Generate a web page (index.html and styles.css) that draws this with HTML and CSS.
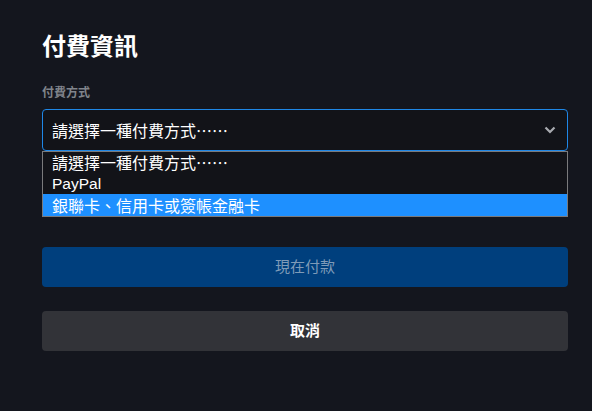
FILE: index.html
```html
<!DOCTYPE html>
<html lang="zh-Hant">
<head>
<meta charset="utf-8">
<link rel="stylesheet" href="styles.css">
</head>
<body>
<div class="panel">
  <h1 class="title">付費資訊</h1>
  <div class="field">
    <div class="label">付費方式</div>
    <div class="select-wrap">
      <div class="select">
        <span class="select-text">請選擇一種付費方式……</span>
        <svg class="chevron" width="12" height="8" viewBox="0 0 12 8"><path d="M1.5 1.5 L6 6 L10.5 1.5" fill="none" stroke="#a9abb0" stroke-width="2.2"/></svg>
      </div>
      <ul class="options">
        <li class="option">請選擇一種付費方式……</li>
        <li class="option latin">PayPal</li>
        <li class="option active">銀聯卡、信用卡或簽帳金融卡</li>
      </ul>
    </div>
  </div>
  <div class="actions">
    <button class="btn btn-primary">現在付款</button>
    <button class="btn btn-secondary">取消</button>
  </div>
</div>
</body>
</html>
```
FILE: styles.css
```css
html, body {
  margin: 0;
  padding: 0;
  background: #14161e;
  font-family: "Noto Sans CJK TC", "Noto Sans", sans-serif;
  color: #ffffff;
}
.panel {
  width: 526px;
  padding: 27px 0 0 42px;
}
.title {
  margin: 0;
  font-size: 24px;
  font-weight: 700;
  line-height: 36px;
  color: #ffffff;
}
.field {
  margin-top: 21px;
}
.label {
  font-size: 12px;
  font-weight: 700;
  line-height: 16px;
  color: #80848b;
}
.select-wrap {
  position: relative;
  margin-top: 9px;
}
.select {
  box-sizing: border-box;
  height: 42px;
  border: 1px solid #1f87e6;
  border-radius: 4px;
  background: #121318;
  display: flex;
  align-items: center;
  justify-content: space-between;
  padding: 0 11px 0 9px;
}
.select-text {
  font-size: 16px;
  line-height: 20px;
  color: #ffffff;
}
.chevron {
  display: block;
}
.options {
  position: absolute;
  left: 0;
  top: 42px;
  width: 526px;
  box-sizing: border-box;
  margin: 0;
  padding: 0;
  list-style: none;
  border: 1px solid #7a7a7c;
  background: #121318;
}
.option {
  font-size: 16px;
  line-height: 21px;
  height: 21px;
  padding: 0 9px;
  color: #ffffff;
  white-space: nowrap;
}
.option.latin {
  font-family: "Liberation Sans", "Noto Sans CJK TC", sans-serif;
  font-size: 15.5px;
}
.option.active {
  background: #1e90ff;
  height: 22px;
  line-height: 22px;
}
.actions {
  margin-top: 96px;
  display: flex;
  flex-direction: column;
  gap: 24px;
}
.btn {
  height: 40px;
  border: none;
  border-radius: 4px;
  font-family: "Noto Sans CJK TC", sans-serif;
  font-size: 15px;
  width: 526px;
  padding: 0 0 3px;
}
.btn-primary {
  background: #003f7d;
  color: #7f9bb8;
}
.btn-secondary {
  background: #323338;
  color: #ffffff;
  font-weight: 700;
}
```
